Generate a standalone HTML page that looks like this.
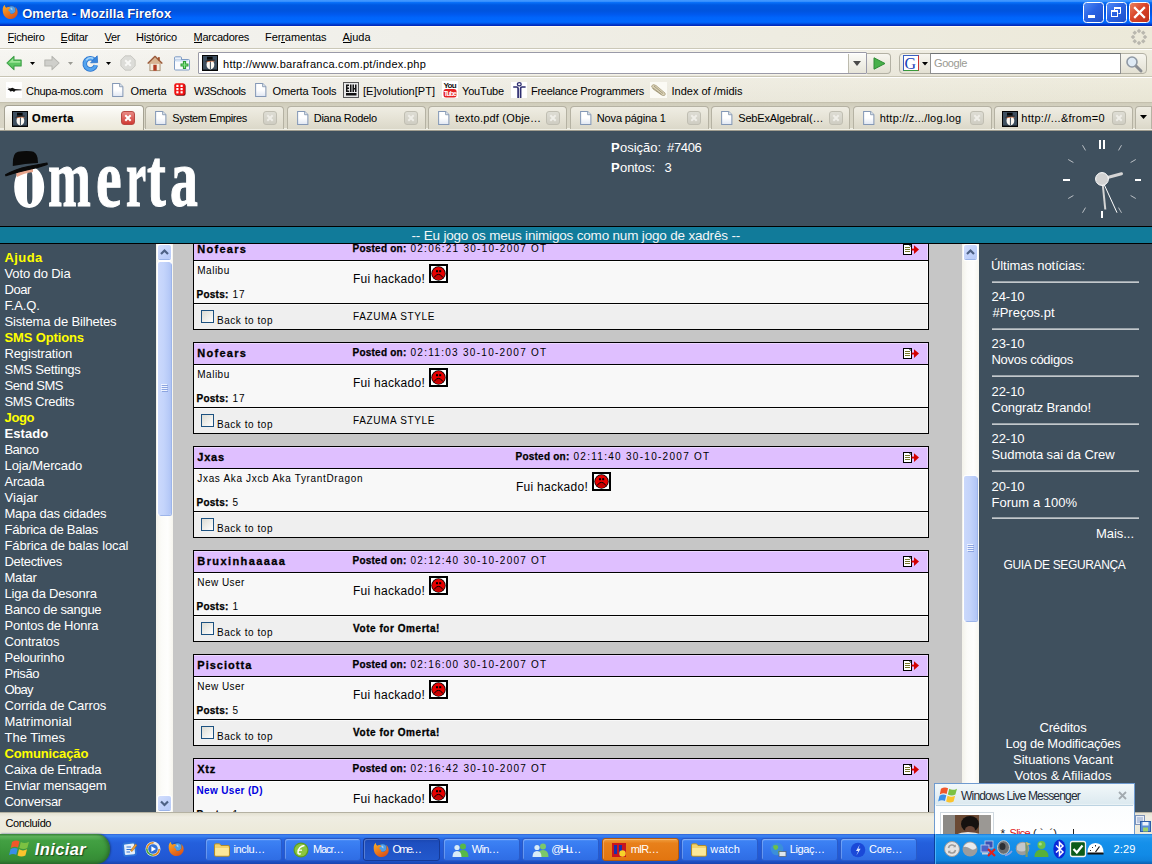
<!DOCTYPE html>
<html><head><meta charset="utf-8"><title>Omerta</title>
<style>
*{box-sizing:border-box;margin:0;padding:0}
html,body{width:1152px;height:864px;overflow:hidden;background:#3f505e;font-family:"Liberation Sans",sans-serif;}
.abs{position:absolute}
.t{position:absolute;white-space:nowrap}
svg{position:absolute;overflow:visible}
</style></head><body>
<!-- chrome -->
<div class="abs" style="left:0px;top:0px;width:1152px;height:26px;background:linear-gradient(#4197ff 0,#3e95ff 5%,#0a72fa 9%,#0059e2 19%,#0054de 42%,#0059ee 55%,#0065fb 68%,#0068ff 85%,#0055e6 90%,#0030c4 96%,#0026b4 100%)"></div>
<svg style="left:2px;top:3.5px" width="16.5" height="15.5" viewBox="0 0 16.5 15.5"><defs><linearGradient id="fg1" x1="0" y1="0" x2="0.6" y2="1"><stop offset="0" stop-color="#f9b22a"/><stop offset=".55" stop-color="#ee7d1c"/><stop offset="1" stop-color="#d9541a"/></linearGradient></defs><circle cx="8.8" cy="7.4" r="6.3" fill="#1c56b8"/><circle cx="9.6" cy="6" r="3.8" fill="#4d9ee8"/><path d="M9 3.2 Q11 4 10.5 6.5 Q9 6 8.2 4.5Z" fill="#9fd0f8"/><path d="M0.7 6.8 C0.4 3.4 1.8 1.3 2.9 0.9 C2.8 2.2 3.4 3.2 4.4 3.7 C5.9 2.6 7.9 3.1 8.5 4.6 C7 4.6 6 5.6 6.5 7.1 C7.6 7.5 8.6 8.1 8.1 9.6 C9.6 10.6 12.6 10.1 13.5 7.1 C14 4.6 13.1 3.1 12.6 2.6 C15.1 4.1 16.2 7.1 15.5 10.1 C14.5 13.6 11 15.4 7.5 15 C3.5 14.5 1 11.2 0.7 6.8Z" fill="url(#fg1)"/></svg>
<span class="t" style="left:22.20px;top:3.80px;font-size:13px;line-height:19px;color:#fff;letter-spacing:0.068px;font-weight:bold;text-shadow:1px 1px 0 #10308c;">Omerta - Mozilla Firefox</span>
<div class="abs" style="left:1083px;top:2px;width:21px;height:21px;background:linear-gradient(135deg,#4f8af6 0,#2a63e4 45%,#2050c8 100%);border:1px solid #fff;border-radius:3.5px;"></div>
<div class="abs" style="left:1106px;top:2px;width:21px;height:21px;background:linear-gradient(135deg,#4f8af6 0,#2a63e4 45%,#2050c8 100%);border:1px solid #fff;border-radius:3.5px;"></div>
<div class="abs" style="left:1129px;top:2px;width:21px;height:21px;background:linear-gradient(135deg,#e9835f 0,#d9452a 45%,#c0301a 100%);border:1px solid #fff;border-radius:3.5px;"></div>
<div class="abs" style="left:1088px;top:15px;width:7px;height:3px;background:#fff"></div>
<svg style="left:1106px;top:2px" width="21" height="21" viewBox="0 0 21 21"><path d="M8.5 8 V5.5 H14.5 V11.5 H12.5" fill="none" stroke="#fff" stroke-width="1"/><rect x="8" y="5" width="7" height="2" fill="#fff"/><rect x="5.5" y="8.5" width="6" height="6" fill="none" stroke="#fff" stroke-width="1"/><rect x="5" y="8" width="7" height="2" fill="#fff"/></svg>
<svg style="left:1129px;top:2px" width="21" height="21" viewBox="0 0 21 21"><path d="M6 6 L15 15 M15 6 L6 15" stroke="#fff" stroke-width="2.3" stroke-linecap="square"/></svg>
<div class="abs" style="left:0px;top:26px;width:1152px;height:23px;background:linear-gradient(90deg,#f6f5f1 0,#f0efe9 35%,#ece9d9 100%);border-top:1px solid #fffcf0;border-bottom:1px solid #cbc8b8"></div>
<span class="t" style="left:7.50px;top:28.69px;font-size:11px;line-height:17px;color:#000;letter-spacing:-0.265px;">Ficheiro</span>
<span class="t" style="left:60.50px;top:28.69px;font-size:11px;line-height:17px;color:#000;letter-spacing:-0.206px;">Editar</span>
<span class="t" style="left:104.50px;top:28.69px;font-size:11px;line-height:17px;color:#000;letter-spacing:-0.337px;">Ver</span>
<span class="t" style="left:136.00px;top:28.69px;font-size:11px;line-height:17px;color:#000;letter-spacing:-0.198px;">Histórico</span>
<span class="t" style="left:193.50px;top:28.69px;font-size:11px;line-height:17px;color:#000;letter-spacing:-0.258px;">Marcadores</span>
<span class="t" style="left:265.00px;top:28.69px;font-size:11px;line-height:17px;color:#000;letter-spacing:-0.078px;">Ferramentas</span>
<span class="t" style="left:342.50px;top:28.69px;font-size:11px;line-height:17px;color:#000;letter-spacing:-0.027px;">Ajuda</span>
<div class="abs" style="left:8px;top:42px;width:6px;height:1px;background:#000"></div>
<div class="abs" style="left:61px;top:42px;width:6px;height:1px;background:#000"></div>
<div class="abs" style="left:105px;top:42px;width:7px;height:1px;background:#000"></div>
<div class="abs" style="left:146px;top:42px;width:6px;height:1px;background:#000"></div>
<div class="abs" style="left:194px;top:42px;width:8px;height:1px;background:#000"></div>
<div class="abs" style="left:280.5px;top:42px;width:4px;height:1px;background:#000"></div>
<div class="abs" style="left:343px;top:42px;width:7px;height:1px;background:#000"></div>
<svg style="left:1131px;top:29px" width="16" height="16" viewBox="0 0 16 16"><rect x="6.40" y="0.40" width="3.2" height="3.2" transform="rotate(45 8.00 2.00)" fill="#b9b7ae"/><rect x="10.64" y="2.16" width="3.2" height="3.2" transform="rotate(45 12.24 3.76)" fill="#b9b7ae"/><rect x="12.40" y="6.40" width="3.2" height="3.2" transform="rotate(45 14.00 8.00)" fill="#b9b7ae"/><rect x="10.64" y="10.64" width="3.2" height="3.2" transform="rotate(45 12.24 12.24)" fill="#b9b7ae"/><rect x="6.40" y="12.40" width="3.2" height="3.2" transform="rotate(45 8.00 14.00)" fill="#b9b7ae"/><rect x="2.16" y="10.64" width="3.2" height="3.2" transform="rotate(45 3.76 12.24)" fill="#b9b7ae"/><rect x="0.40" y="6.40" width="3.2" height="3.2" transform="rotate(45 2.00 8.00)" fill="#b9b7ae"/><rect x="2.16" y="2.16" width="3.2" height="3.2" transform="rotate(45 3.76 3.76)" fill="#b9b7ae"/></svg>
<div class="abs" style="left:0px;top:49px;width:1152px;height:28px;background:linear-gradient(rgba(255,255,255,.18),rgba(0,0,0,.012)),linear-gradient(90deg,#f5f4ef 0,#efede6 35%,#ebe8d8 100%);border-top:1px solid #fff;border-bottom:1px solid #c8c5b4"></div>
<svg style="left:6px;top:55px" width="16" height="16" viewBox="0 0 19 18"><path d="M1 9 L9.5 1 L9.5 5.5 L18 5.5 L18 12.5 L9.5 12.5 L9.5 17 Z" fill="#5cc662" stroke="#3a9c44" stroke-width="1.2" stroke-linejoin="round"/><path d="M3 9 L8.5 3.8 L8.5 6.6 L17 6.6 L17 8.8 L3.5 8.8Z" fill="#a6eba0" opacity=".85"/></svg>
<svg style="left:30px;top:62px" width="5" height="3"><path d="M0 0 L5 0 L2.5 3Z" fill="#000"/></svg>
<svg style="left:43.5px;top:55px" width="16" height="16" viewBox="0 0 19 18"><path d="M18 9 L9.5 1 L9.5 5.5 L1 5.5 L1 12.5 L9.5 12.5 L9.5 17 Z" fill="#cfcfcb" stroke="#b5b5b0" stroke-width="1.2" stroke-linejoin="round"/></svg>
<svg style="left:68px;top:62px" width="5" height="3"><path d="M0 0 L5 0 L2.5 3Z" fill="#9a9a94"/></svg>
<svg style="left:81.5px;top:54.5px" width="16" height="16" viewBox="0 0 16 16"><path d="M12.6 5.2 A5.6 5.6 0 1 0 13.8 10.2" fill="none" stroke="#2a72cc" stroke-width="4.6"/><path d="M12.6 5.2 A5.6 5.6 0 1 0 13.8 10.2" fill="none" stroke="#55a4ee" stroke-width="3"/><path d="M4.2 5.2 A5.6 5.6 0 0 1 11 3.4" fill="none" stroke="#a4d4fa" stroke-width="1.6"/><path d="M8.6 7.8 L15.6 7.6 L15.2 0.8 Z" fill="#3a86dc" stroke="#2a72cc" stroke-width=".8" stroke-linejoin="round"/></svg>
<svg style="left:106px;top:62px" width="5" height="3"><path d="M0 0 L5 0 L2.5 3Z" fill="#000"/></svg>
<svg style="left:119.5px;top:55px" width="16" height="16" viewBox="0 0 19 19"><path d="M6 1 H13 L18 6 V13 L13 18 H6 L1 13 V6Z" fill="#dcdcd8" stroke="#c2c2bc" stroke-width="1"/><path d="M6.2 6.2 L12.8 12.8 M12.8 6.2 L6.2 12.8" stroke="#f8f8f6" stroke-width="2.2"/></svg>
<svg style="left:146.5px;top:54.5px" width="16" height="17" viewBox="0 0 19 20"><rect x="3.5" y="9" width="12" height="9.5" fill="#f3ecdf" stroke="#a08563" stroke-width="1"/><path d="M0.8 10 L9.5 1.5 L18.2 10" fill="#c9a27c" stroke="#9a5a3c" stroke-width="1.6" stroke-linejoin="round"/><path d="M2.5 10 L9.5 3.2 L16.5 10Z" fill="#d8b493"/><rect x="7.5" y="11.5" width="4" height="7" fill="#b03a22"/><rect x="13" y="2.5" width="2.2" height="4" fill="#a0522d"/></svg>
<svg style="left:174px;top:55.5px" width="16" height="15" viewBox="0 0 16 15"><rect x="0.5" y="3.5" width="15" height="10.5" rx="1" fill="#fbfcfe" stroke="#7f9cc4" stroke-width="1"/><rect x="0.5" y="0.8" width="7" height="3.4" rx="1" fill="#e8f0fa" stroke="#7f9cc4" stroke-width="1"/><rect x="1.5" y="4" width="13" height="1.6" fill="#cfe0f4"/><path d="M10.5 5 V13 M6.5 9 H14.5" stroke="#2a9a34" stroke-width="3.2"/><path d="M10.5 6 V12 M7.5 9 H13.5" stroke="#86e486" stroke-width="1.2"/></svg>
<div class="abs" style="left:198px;top:52px;width:669px;height:22px;background:#fff;border:1px solid #9a9aa8;border-radius:1px;box-shadow:0 0 0 1px #f4f2e8"></div>
<svg style="left:202px;top:55px" width="16" height="16" viewBox="0 0 16 16"><rect width="16" height="16" fill="#050505"/><rect x="1" y="1" width="14" height="13.6" fill="#3e4f5f"/><ellipse cx="8.4" cy="9.8" rx="3.9" ry="4.6" fill="#fbf8f2"/><rect x="7.9" y="5.5" width="1" height="9" fill="#3e4f5f"/><path d="M4 6.3 Q8 5.2 12.6 5.6 L12.4 6.4 Q8 6.6 4.2 7.2Z" fill="#d9835a"/><path d="M5 1.8 H10.6 V4.6 H5Z" fill="#050505"/><path d="M3.6 5.9 Q8 4.4 12.8 4.7 L12.8 5.5 Q8 5.4 3.8 6.8Z" fill="#0a0d10"/></svg>
<span class="t" style="left:223.00px;top:55.69px;font-size:11px;line-height:17px;color:#000;letter-spacing:0.258px;">http://www.barafranca.com.pt/index.php</span>
<div class="abs" style="left:848px;top:54px;width:18px;height:19px;background:linear-gradient(#fbfbf8,#e6e4d8);border-left:1px solid #bdbbae"></div>
<svg style="left:853px;top:61px" width="8" height="5"><path d="M0 0 L8 0 L4 5Z" fill="#4a4a4a"/></svg>
<div class="abs" style="left:867px;top:53px;width:24px;height:21px;background:linear-gradient(#f7f6f0,#e3e0d2);border:1px solid #b3b1a4;border-left:none;border-radius:0 4px 4px 0"></div>
<svg style="left:873px;top:57px" width="13" height="13"><path d="M1 0.8 L12 6.5 L1 12.2Z" fill="#48b04a" stroke="#2f8c36" stroke-width="1"/></svg>
<div class="abs" style="left:899px;top:53px;width:248px;height:21px;background:linear-gradient(#f7f6f0,#e3e0d2);border:1px solid #b3b1a4;border-radius:4px"></div>
<div class="abs" style="left:930px;top:53px;width:191px;height:21px;background:#fff;border:1px solid #8e8f8f;border-top-color:#6f7273"></div>
<div class="abs" style="left:903px;top:55px;width:16px;height:16px;background:#fff;border:1px solid #3a5fc0;border-right-color:#c33;border-bottom-color:#3a9a3a"></div>
<span class="t" style="left:904.50px;top:52.60px;font-size:16px;line-height:22px;color:#1a3fb8;letter-spacing:0.000px;font-family:'Liberation Serif',serif;">G</span>
<svg style="left:922px;top:62px" width="6" height="4"><path d="M0 0 L6 0 L3 3.5Z" fill="#000"/></svg>
<span class="t" style="left:934.00px;top:55.19px;font-size:11px;line-height:17px;color:#9a9a92;letter-spacing:-0.411px;">Google</span>
<svg style="left:1125px;top:55px" width="18" height="18" viewBox="0 0 18 18"><path d="M10 10 L16 16" stroke="#8a8d92" stroke-width="3" stroke-linecap="round"/><circle cx="7" cy="7" r="5" fill="#dfeaf5" stroke="#8f98a4" stroke-width="1.6"/></svg>
<div class="abs" style="left:0px;top:77px;width:1152px;height:26px;background:linear-gradient(rgba(255,255,255,.15),rgba(0,0,0,.012)),linear-gradient(90deg,#f4f3ed 0,#eeece3 35%,#ebe8d7 100%);border-top:1px solid #fff"></div>
<div class="abs" style="left:6px;top:82px;width:16px;height:16px;background:#fff"></div>
<svg style="left:6px;top:82px" width="16" height="16"><path d="M1.5 5.5 L4 6.6 L6.5 5.8 L9 7 L15.5 7.4 L15.5 8.2 L9.5 8.6 L8 10 L6.6 9 L4.2 9.4 L3.4 8.2 L1.5 7.4 L3 6.8Z" fill="#111"/></svg>
<span class="t" style="left:26.00px;top:82.69px;font-size:11px;line-height:17px;color:#000;letter-spacing:-0.284px;">Chupa-mos.com</span>
<svg style="left:112px;top:83.2px" width="11.5" height="14" viewBox="0 0 12 15"><defs><linearGradient id="pg" x1="0" y1="0" x2="0" y2="1"><stop offset=".5" stop-color="#fff"/><stop offset="1" stop-color="#dfe6f2"/></linearGradient></defs><path d="M0.5 0.5 H8 L11.5 4 V14.5 H0.5Z" fill="url(#pg)" stroke="#8498b6" stroke-width="1.1"/><path d="M8 0.5 V4 H11.5" fill="#dfe6f0" stroke="#8c9db4" stroke-width="1"/></svg>
<span class="t" style="left:130.50px;top:82.69px;font-size:11px;line-height:17px;color:#000;letter-spacing:-0.113px;">Omerta</span>
<svg style="left:174px;top:83px" width="12" height="13" viewBox="0 0 12 13"><rect x="1" y="1" width="10.6" height="11.8" rx="2" fill="#6a0808"/><rect x="0.3" y="0.2" width="10.6" height="11.8" rx="2" fill="#f01010"/><g fill="#fff"><rect x="2.3" y="1.8" width="2.2" height="2.2"/><rect x="6.5" y="1.8" width="2.2" height="2.2"/><rect x="2.3" y="5" width="2.2" height="2.2"/><rect x="6.5" y="5" width="2.2" height="2.2"/><rect x="2.3" y="8.2" width="2.2" height="2.2"/><rect x="6.5" y="8.2" width="2.2" height="2.2"/></g></svg>
<span class="t" style="left:194.00px;top:82.69px;font-size:11px;line-height:17px;color:#000;letter-spacing:-0.459px;">W3Schools</span>
<svg style="left:254.5px;top:83.2px" width="11.5" height="14" viewBox="0 0 12 15"><defs><linearGradient id="pg" x1="0" y1="0" x2="0" y2="1"><stop offset=".5" stop-color="#fff"/><stop offset="1" stop-color="#dfe6f2"/></linearGradient></defs><path d="M0.5 0.5 H8 L11.5 4 V14.5 H0.5Z" fill="url(#pg)" stroke="#8498b6" stroke-width="1.1"/><path d="M8 0.5 V4 H11.5" fill="#dfe6f0" stroke="#8c9db4" stroke-width="1"/></svg>
<span class="t" style="left:272.50px;top:82.69px;font-size:11px;line-height:17px;color:#000;letter-spacing:-0.101px;">Omerta Tools</span>
<div class="abs" style="left:343px;top:82px;width:16px;height:16px;background:#e8e8e8;border:1px solid #555"></div>
<svg style="left:343px;top:82px" width="16" height="16"><path d="M3 2.5 H6 V4 H4.5 V5.5 H6 V7 H4.5 V8.5 H6.2 V10 H3Z M7 2.5 H8.5 V10 H7Z M9.5 2.5 H11 V6 H12 V2.5 H13.5 V10 H12 V7.5 H11 V10 H9.5Z M3 11 H13.5 V13.5 H3Z" fill="#111"/></svg>
<span class="t" style="left:363.00px;top:82.69px;font-size:11px;line-height:17px;color:#000;letter-spacing:0.031px;">[E]volution[PT]</span>
<svg style="left:442px;top:81px" width="16" height="17" viewBox="0 0 16 17"><rect width="16" height="17" fill="#fff"/><rect x="1.5" y="8" width="13" height="8.5" rx="2.5" fill="#e52222"/></svg>
<span class="t" style="left:443.50px;top:78.73px;font-size:8px;line-height:14px;color:#111;letter-spacing:-0.672px;font-weight:bold;">You</span>
<span class="t" style="left:443.80px;top:87.07px;font-size:7px;line-height:13px;color:#fff;letter-spacing:-1.050px;font-weight:bold;">Tube</span>
<span class="t" style="left:462.00px;top:82.69px;font-size:11px;line-height:17px;color:#000;letter-spacing:-0.175px;">YouTube</span>
<svg style="left:511px;top:82px" width="16" height="16" viewBox="0 0 16 16"><rect width="16" height="16" fill="#fff"/><ellipse cx="8.3" cy="2.2" rx="1.9" ry="1.6" fill="none" stroke="#2e2e70" stroke-width="1.3"/><path d="M2.2 5 H5.6 Q7.1 5 7.1 6.5 V16 M14.6 5 H11 Q9.6 5 9.6 6.5 V16" fill="none" stroke="#2e2e70" stroke-width="1.7"/></svg>
<span class="t" style="left:531.00px;top:82.69px;font-size:11px;line-height:17px;color:#000;letter-spacing:-0.266px;">Freelance Programmers</span>
<svg style="left:650px;top:82px" width="17" height="16" viewBox="0 0 17 16"><rect width="17" height="16" fill="#fbfaf4"/><path d="M1.5 4 Q3 1.5 6 3.5 L15 11 Q16 14 12.5 13.5 L3 7Z" fill="#d9d0b4" stroke="#a99f80" stroke-width=".8"/><path d="M4 4 L13 11.5 M3 6 L11.5 12.5" stroke="#8e8568" stroke-width=".7"/></svg>
<span class="t" style="left:671.50px;top:82.69px;font-size:11px;line-height:17px;color:#000;letter-spacing:0.005px;">Index of /midis</span>
<div class="abs" style="left:0px;top:102px;width:1152px;height:29px;background:linear-gradient(#cfccba 0,#d9d6c7 25%,#d8d5c5 100%);border-top:1px solid #c4c0ae"></div>
<div class="abs" style="left:0px;top:128px;width:1152px;height:3px;background:#a09d8f;border-top:2px solid #efeee4"></div>
<div class="abs" style="left:3.5px;top:105px;width:140px;height:25px;background:linear-gradient(#fdfdfb,#f3f1e8 50%,#ece9da);border:1px solid #a5a293;border-bottom:none;border-radius:4px 4px 0 0"></div>
<svg style="left:12px;top:110.5px" width="16" height="16" viewBox="0 0 16 16"><rect width="16" height="16" fill="#050505"/><rect x="1" y="1" width="14" height="13.6" fill="#3e4f5f"/><ellipse cx="8.4" cy="9.8" rx="3.9" ry="4.6" fill="#fbf8f2"/><rect x="7.9" y="5.5" width="1" height="9" fill="#3e4f5f"/><path d="M4 6.3 Q8 5.2 12.6 5.6 L12.4 6.4 Q8 6.6 4.2 7.2Z" fill="#d9835a"/><path d="M5 1.8 H10.6 V4.6 H5Z" fill="#050505"/><path d="M3.6 5.9 Q8 4.4 12.8 4.7 L12.8 5.5 Q8 5.4 3.8 6.8Z" fill="#0a0d10"/></svg>
<span class="t" style="left:32.00px;top:109.99px;font-size:11px;line-height:17px;color:#000;letter-spacing:0.580px;font-weight:bold;-webkit-text-stroke:0.25px #000;">Omerta</span>
<div class="abs" style="left:121px;top:111px;width:14px;height:14px;background:linear-gradient(#e98a84,#d03a34);border:1px solid #b84a44;border-radius:3px"></div>
<svg style="left:121px;top:111px" width="14" height="14"><path d="M4.3 4.3 L9.7 9.7 M9.7 4.3 L4.3 9.7" stroke="#fff" stroke-width="2"/></svg>
<div class="abs" style="left:145px;top:106px;width:139px;height:23px;background:linear-gradient(#efede3,#e6e3d6 50%,#dbd8c9);border:1px solid #b5b2a3;border-bottom:none;border-radius:4px 4px 0 0"></div>
<svg style="left:155px;top:111px" width="11.5" height="14" viewBox="0 0 12 15"><defs><linearGradient id="pg" x1="0" y1="0" x2="0" y2="1"><stop offset=".5" stop-color="#fff"/><stop offset="1" stop-color="#dfe6f2"/></linearGradient></defs><path d="M0.5 0.5 H8 L11.5 4 V14.5 H0.5Z" fill="url(#pg)" stroke="#8498b6" stroke-width="1.1"/><path d="M8 0.5 V4 H11.5" fill="#dfe6f0" stroke="#8c9db4" stroke-width="1"/></svg>
<span class="t" style="left:172.30px;top:109.99px;font-size:11px;line-height:17px;color:#000;letter-spacing:-0.398px;">System Empires</span>
<div class="abs" style="left:262.5px;top:111px;width:14px;height:14px;background:linear-gradient(#deddd4,#cfcdc2);border:1px solid #c0beb2;border-radius:3px"></div>
<svg style="left:262.5px;top:111px" width="14" height="14"><path d="M4.3 4.3 L9.7 9.7 M9.7 4.3 L4.3 9.7" stroke="#efeee8" stroke-width="2"/></svg>
<div class="abs" style="left:286.5px;top:106px;width:139px;height:23px;background:linear-gradient(#efede3,#e6e3d6 50%,#dbd8c9);border:1px solid #b5b2a3;border-bottom:none;border-radius:4px 4px 0 0"></div>
<svg style="left:296.5px;top:111px" width="11.5" height="14" viewBox="0 0 12 15"><defs><linearGradient id="pg" x1="0" y1="0" x2="0" y2="1"><stop offset=".5" stop-color="#fff"/><stop offset="1" stop-color="#dfe6f2"/></linearGradient></defs><path d="M0.5 0.5 H8 L11.5 4 V14.5 H0.5Z" fill="url(#pg)" stroke="#8498b6" stroke-width="1.1"/><path d="M8 0.5 V4 H11.5" fill="#dfe6f0" stroke="#8c9db4" stroke-width="1"/></svg>
<span class="t" style="left:313.80px;top:109.99px;font-size:11px;line-height:17px;color:#000;letter-spacing:-0.304px;">Diana Rodelo</span>
<div class="abs" style="left:404px;top:111px;width:14px;height:14px;background:linear-gradient(#deddd4,#cfcdc2);border:1px solid #c0beb2;border-radius:3px"></div>
<svg style="left:404px;top:111px" width="14" height="14"><path d="M4.3 4.3 L9.7 9.7 M9.7 4.3 L4.3 9.7" stroke="#efeee8" stroke-width="2"/></svg>
<div class="abs" style="left:428px;top:106px;width:139px;height:23px;background:linear-gradient(#efede3,#e6e3d6 50%,#dbd8c9);border:1px solid #b5b2a3;border-bottom:none;border-radius:4px 4px 0 0"></div>
<svg style="left:438px;top:111px" width="11.5" height="14" viewBox="0 0 12 15"><defs><linearGradient id="pg" x1="0" y1="0" x2="0" y2="1"><stop offset=".5" stop-color="#fff"/><stop offset="1" stop-color="#dfe6f2"/></linearGradient></defs><path d="M0.5 0.5 H8 L11.5 4 V14.5 H0.5Z" fill="url(#pg)" stroke="#8498b6" stroke-width="1.1"/><path d="M8 0.5 V4 H11.5" fill="#dfe6f0" stroke="#8c9db4" stroke-width="1"/></svg>
<span class="t" style="left:455.30px;top:109.99px;font-size:11px;line-height:17px;color:#000;letter-spacing:0.178px;">texto.pdf (Obje…</span>
<div class="abs" style="left:545.5px;top:111px;width:14px;height:14px;background:linear-gradient(#deddd4,#cfcdc2);border:1px solid #c0beb2;border-radius:3px"></div>
<svg style="left:545.5px;top:111px" width="14" height="14"><path d="M4.3 4.3 L9.7 9.7 M9.7 4.3 L4.3 9.7" stroke="#efeee8" stroke-width="2"/></svg>
<div class="abs" style="left:569.5px;top:106px;width:139px;height:23px;background:linear-gradient(#efede3,#e6e3d6 50%,#dbd8c9);border:1px solid #b5b2a3;border-bottom:none;border-radius:4px 4px 0 0"></div>
<svg style="left:579.5px;top:111px" width="11.5" height="14" viewBox="0 0 12 15"><defs><linearGradient id="pg" x1="0" y1="0" x2="0" y2="1"><stop offset=".5" stop-color="#fff"/><stop offset="1" stop-color="#dfe6f2"/></linearGradient></defs><path d="M0.5 0.5 H8 L11.5 4 V14.5 H0.5Z" fill="url(#pg)" stroke="#8498b6" stroke-width="1.1"/><path d="M8 0.5 V4 H11.5" fill="#dfe6f0" stroke="#8c9db4" stroke-width="1"/></svg>
<span class="t" style="left:596.80px;top:109.99px;font-size:11px;line-height:17px;color:#000;letter-spacing:-0.149px;">Nova página 1</span>
<div class="abs" style="left:687px;top:111px;width:14px;height:14px;background:linear-gradient(#deddd4,#cfcdc2);border:1px solid #c0beb2;border-radius:3px"></div>
<svg style="left:687px;top:111px" width="14" height="14"><path d="M4.3 4.3 L9.7 9.7 M9.7 4.3 L4.3 9.7" stroke="#efeee8" stroke-width="2"/></svg>
<div class="abs" style="left:711px;top:106px;width:139px;height:23px;background:linear-gradient(#efede3,#e6e3d6 50%,#dbd8c9);border:1px solid #b5b2a3;border-bottom:none;border-radius:4px 4px 0 0"></div>
<svg style="left:721px;top:111px" width="11.5" height="14" viewBox="0 0 12 15"><defs><linearGradient id="pg" x1="0" y1="0" x2="0" y2="1"><stop offset=".5" stop-color="#fff"/><stop offset="1" stop-color="#dfe6f2"/></linearGradient></defs><path d="M0.5 0.5 H8 L11.5 4 V14.5 H0.5Z" fill="url(#pg)" stroke="#8498b6" stroke-width="1.1"/><path d="M8 0.5 V4 H11.5" fill="#dfe6f0" stroke="#8c9db4" stroke-width="1"/></svg>
<span class="t" style="left:738.30px;top:109.99px;font-size:11px;line-height:17px;color:#000;letter-spacing:-0.203px;">SebExAlgebraI(…</span>
<div class="abs" style="left:828.5px;top:111px;width:14px;height:14px;background:linear-gradient(#deddd4,#cfcdc2);border:1px solid #c0beb2;border-radius:3px"></div>
<svg style="left:828.5px;top:111px" width="14" height="14"><path d="M4.3 4.3 L9.7 9.7 M9.7 4.3 L4.3 9.7" stroke="#efeee8" stroke-width="2"/></svg>
<div class="abs" style="left:852.5px;top:106px;width:139px;height:23px;background:linear-gradient(#efede3,#e6e3d6 50%,#dbd8c9);border:1px solid #b5b2a3;border-bottom:none;border-radius:4px 4px 0 0"></div>
<svg style="left:862.5px;top:111px" width="11.5" height="14" viewBox="0 0 12 15"><defs><linearGradient id="pg" x1="0" y1="0" x2="0" y2="1"><stop offset=".5" stop-color="#fff"/><stop offset="1" stop-color="#dfe6f2"/></linearGradient></defs><path d="M0.5 0.5 H8 L11.5 4 V14.5 H0.5Z" fill="url(#pg)" stroke="#8498b6" stroke-width="1.1"/><path d="M8 0.5 V4 H11.5" fill="#dfe6f0" stroke="#8c9db4" stroke-width="1"/></svg>
<span class="t" style="left:879.80px;top:109.99px;font-size:11px;line-height:17px;color:#000;letter-spacing:0.202px;">http://z.../log.log</span>
<div class="abs" style="left:970px;top:111px;width:14px;height:14px;background:linear-gradient(#deddd4,#cfcdc2);border:1px solid #c0beb2;border-radius:3px"></div>
<svg style="left:970px;top:111px" width="14" height="14"><path d="M4.3 4.3 L9.7 9.7 M9.7 4.3 L4.3 9.7" stroke="#efeee8" stroke-width="2"/></svg>
<div class="abs" style="left:994px;top:106px;width:139px;height:23px;background:linear-gradient(#efede3,#e6e3d6 50%,#dbd8c9);border:1px solid #b5b2a3;border-bottom:none;border-radius:4px 4px 0 0"></div>
<svg style="left:1001.5px;top:110.5px" width="16" height="16" viewBox="0 0 16 16"><rect width="16" height="16" fill="#050505"/><rect x="1" y="1" width="14" height="13.6" fill="#3e4f5f"/><ellipse cx="8.4" cy="9.8" rx="3.9" ry="4.6" fill="#fbf8f2"/><rect x="7.9" y="5.5" width="1" height="9" fill="#3e4f5f"/><path d="M4 6.3 Q8 5.2 12.6 5.6 L12.4 6.4 Q8 6.6 4.2 7.2Z" fill="#d9835a"/><path d="M5 1.8 H10.6 V4.6 H5Z" fill="#050505"/><path d="M3.6 5.9 Q8 4.4 12.8 4.7 L12.8 5.5 Q8 5.4 3.8 6.8Z" fill="#0a0d10"/></svg>
<span class="t" style="left:1021.30px;top:109.99px;font-size:11px;line-height:17px;color:#000;letter-spacing:0.290px;">http://...&amp;from=0</span>
<div class="abs" style="left:1111.5px;top:111px;width:14px;height:14px;background:linear-gradient(#deddd4,#cfcdc2);border:1px solid #c0beb2;border-radius:3px"></div>
<svg style="left:1111.5px;top:111px" width="14" height="14"><path d="M4.3 4.3 L9.7 9.7 M9.7 4.3 L4.3 9.7" stroke="#efeee8" stroke-width="2"/></svg>
<div class="abs" style="left:1135px;top:106px;width:17px;height:23px;background:linear-gradient(#efede3,#dbd8c9);border:1px solid #b5b2a3;border-bottom:none;border-radius:4px 0 0 0"></div>
<svg style="left:1140px;top:115px" width="7" height="4"><path d="M0 0 L7 0 L3.5 4Z" fill="#000"/></svg>
<div class="abs" style="left:156px;top:244px;width:17px;height:568px;background:linear-gradient(90deg,#f3f2ea 0,#fbfbf8 30%,#fefefd 70%,#f6f5ee 100%)"></div>
<div class="abs" style="left:157px;top:244px;width:15px;height:17px;background:#fff;border-radius:3px"></div>
<div class="abs" style="left:158px;top:245px;width:13px;height:14px;background:linear-gradient(135deg,#d3defc 0,#c3d3fb 50%,#b6c9f8 100%);border-radius:2px;box-shadow:0 1px 0 #9ab3e8"></div>
<svg style="left:160px;top:249px" width="9" height="7"><path d="M1 5 L4.5 1.5 L8 5" stroke="#4d6185" stroke-width="2.2" fill="none"/></svg>
<div class="abs" style="left:157px;top:795px;width:15px;height:17px;background:#fff;border-radius:3px"></div>
<div class="abs" style="left:158px;top:796px;width:13px;height:14px;background:linear-gradient(135deg,#d3defc 0,#c3d3fb 50%,#b6c9f8 100%);border-radius:2px;box-shadow:0 1px 0 #9ab3e8"></div>
<svg style="left:160px;top:800px" width="9" height="7"><path d="M1 1.5 L4.5 5 L8 1.5" stroke="#4d6185" stroke-width="2.2" fill="none"/></svg>
<div class="abs" style="left:157px;top:261px;width:15px;height:255px;background:#fff;border-radius:3px"></div>
<div class="abs" style="left:158px;top:262px;width:13px;height:253px;background:linear-gradient(90deg,#cbd9fc 0,#c4d4fb 45%,#b8cbf8 80%,#b0c4f5 100%);border-radius:2px;box-shadow:1px 1px 0 #9db5ea"></div>
<div class="abs" style="left:161px;top:384px;width:6px;height:1px;background:#eef3fe"></div>
<div class="abs" style="left:162px;top:385px;width:6px;height:1px;background:#8ca4e0"></div>
<div class="abs" style="left:161px;top:386px;width:6px;height:1px;background:#eef3fe"></div>
<div class="abs" style="left:162px;top:387px;width:6px;height:1px;background:#8ca4e0"></div>
<div class="abs" style="left:161px;top:388px;width:6px;height:1px;background:#eef3fe"></div>
<div class="abs" style="left:162px;top:389px;width:6px;height:1px;background:#8ca4e0"></div>
<div class="abs" style="left:161px;top:390px;width:6px;height:1px;background:#eef3fe"></div>
<div class="abs" style="left:162px;top:391px;width:6px;height:1px;background:#8ca4e0"></div>
<div class="abs" style="left:962px;top:244px;width:17px;height:568px;background:linear-gradient(90deg,#f3f2ea 0,#fbfbf8 30%,#fefefd 70%,#f6f5ee 100%)"></div>
<div class="abs" style="left:963px;top:244px;width:15px;height:17px;background:#fff;border-radius:3px"></div>
<div class="abs" style="left:964px;top:245px;width:13px;height:14px;background:linear-gradient(135deg,#d3defc 0,#c3d3fb 50%,#b6c9f8 100%);border-radius:2px;box-shadow:0 1px 0 #9ab3e8"></div>
<svg style="left:966px;top:249px" width="9" height="7"><path d="M1 5 L4.5 1.5 L8 5" stroke="#4d6185" stroke-width="2.2" fill="none"/></svg>
<div class="abs" style="left:963px;top:795px;width:15px;height:17px;background:#fff;border-radius:3px"></div>
<div class="abs" style="left:964px;top:796px;width:13px;height:14px;background:linear-gradient(135deg,#d3defc 0,#c3d3fb 50%,#b6c9f8 100%);border-radius:2px;box-shadow:0 1px 0 #9ab3e8"></div>
<svg style="left:966px;top:800px" width="9" height="7"><path d="M1 1.5 L4.5 5 L8 1.5" stroke="#4d6185" stroke-width="2.2" fill="none"/></svg>
<div class="abs" style="left:963px;top:475px;width:15px;height:147px;background:#fff;border-radius:3px"></div>
<div class="abs" style="left:964px;top:476px;width:13px;height:145px;background:linear-gradient(90deg,#cbd9fc 0,#c4d4fb 45%,#b8cbf8 80%,#b0c4f5 100%);border-radius:2px;box-shadow:1px 1px 0 #9db5ea"></div>
<div class="abs" style="left:967px;top:544px;width:6px;height:1px;background:#eef3fe"></div>
<div class="abs" style="left:968px;top:545px;width:6px;height:1px;background:#8ca4e0"></div>
<div class="abs" style="left:967px;top:546px;width:6px;height:1px;background:#eef3fe"></div>
<div class="abs" style="left:968px;top:547px;width:6px;height:1px;background:#8ca4e0"></div>
<div class="abs" style="left:967px;top:548px;width:6px;height:1px;background:#eef3fe"></div>
<div class="abs" style="left:968px;top:549px;width:6px;height:1px;background:#8ca4e0"></div>
<div class="abs" style="left:967px;top:550px;width:6px;height:1px;background:#eef3fe"></div>
<div class="abs" style="left:968px;top:551px;width:6px;height:1px;background:#8ca4e0"></div>
<!-- page -->
<div class="abs" style="left:0px;top:131px;width:1152px;height:95px;background:#3f505e"></div>
<div class="abs" style="left:0px;top:226px;width:1152px;height:18px;background:#117b9a;border-top:1px solid #000;border-bottom:1px solid #000"></div>
<span class="t" style="left:411.50px;top:225.57px;font-size:13.5px;line-height:19px;color:#f2f6f8;letter-spacing:-0.183px;">-- Eu jogo os meus inimigos como num jogo de xadrês --</span>
<div class="abs" style="left:0px;top:244px;width:156px;height:568px;background:#3f505e"></div>
<span class="t" style="left:4.50px;top:248.00px;font-size:13px;line-height:19px;color:#ffff00;letter-spacing:0.397px;font-weight:bold;">Ajuda</span>
<span class="t" style="left:4.50px;top:264.00px;font-size:13px;line-height:19px;color:#fff;letter-spacing:-0.111px;">Voto do Dia</span>
<span class="t" style="left:4.50px;top:280.00px;font-size:13px;line-height:19px;color:#fff;letter-spacing:-0.445px;">Doar</span>
<span class="t" style="left:4.50px;top:296.00px;font-size:13px;line-height:19px;color:#fff;letter-spacing:-0.170px;">F.A.Q.</span>
<span class="t" style="left:4.50px;top:312.00px;font-size:13px;line-height:19px;color:#fff;letter-spacing:-0.158px;">Sistema de Bilhetes</span>
<span class="t" style="left:4.50px;top:328.00px;font-size:13px;line-height:19px;color:#ffff00;letter-spacing:-0.136px;font-weight:bold;">SMS Options</span>
<span class="t" style="left:4.50px;top:344.00px;font-size:13px;line-height:19px;color:#fff;letter-spacing:-0.148px;">Registration</span>
<span class="t" style="left:4.50px;top:360.00px;font-size:13px;line-height:19px;color:#fff;letter-spacing:-0.230px;">SMS Settings</span>
<span class="t" style="left:4.50px;top:376.00px;font-size:13px;line-height:19px;color:#fff;letter-spacing:-0.444px;">Send SMS</span>
<span class="t" style="left:4.50px;top:392.00px;font-size:13px;line-height:19px;color:#fff;letter-spacing:-0.297px;">SMS Credits</span>
<span class="t" style="left:4.50px;top:408.00px;font-size:13px;line-height:19px;color:#ffff00;letter-spacing:-0.339px;font-weight:bold;">Jogo</span>
<span class="t" style="left:4.50px;top:424.00px;font-size:13px;line-height:19px;color:#fff;letter-spacing:0.076px;font-weight:bold;">Estado</span>
<span class="t" style="left:4.50px;top:440.00px;font-size:13px;line-height:19px;color:#fff;letter-spacing:-0.613px;">Banco</span>
<span class="t" style="left:4.50px;top:456.00px;font-size:13px;line-height:19px;color:#fff;letter-spacing:-0.089px;">Loja/Mercado</span>
<span class="t" style="left:4.50px;top:472.00px;font-size:13px;line-height:19px;color:#fff;letter-spacing:-0.232px;">Arcada</span>
<span class="t" style="left:4.50px;top:488.00px;font-size:13px;line-height:19px;color:#fff;letter-spacing:0.066px;">Viajar</span>
<span class="t" style="left:4.50px;top:504.00px;font-size:13px;line-height:19px;color:#fff;letter-spacing:-0.226px;">Mapa das cidades</span>
<span class="t" style="left:4.50px;top:520.00px;font-size:13px;line-height:19px;color:#fff;letter-spacing:-0.254px;">Fábrica de Balas</span>
<span class="t" style="left:4.50px;top:536.00px;font-size:13px;line-height:19px;color:#fff;letter-spacing:-0.117px;">Fábrica de balas local</span>
<span class="t" style="left:4.50px;top:552.00px;font-size:13px;line-height:19px;color:#fff;letter-spacing:-0.329px;">Detectives</span>
<span class="t" style="left:4.50px;top:568.00px;font-size:13px;line-height:19px;color:#fff;letter-spacing:-0.206px;">Matar</span>
<span class="t" style="left:4.50px;top:584.00px;font-size:13px;line-height:19px;color:#fff;letter-spacing:-0.214px;">Liga da Desonra</span>
<span class="t" style="left:4.50px;top:600.00px;font-size:13px;line-height:19px;color:#fff;letter-spacing:-0.293px;">Banco de sangue</span>
<span class="t" style="left:4.50px;top:616.00px;font-size:13px;line-height:19px;color:#fff;letter-spacing:-0.258px;">Pontos de Honra</span>
<span class="t" style="left:4.50px;top:632.00px;font-size:13px;line-height:19px;color:#fff;letter-spacing:-0.185px;">Contratos</span>
<span class="t" style="left:4.50px;top:648.00px;font-size:13px;line-height:19px;color:#fff;letter-spacing:-0.246px;">Pelourinho</span>
<span class="t" style="left:4.50px;top:664.00px;font-size:13px;line-height:19px;color:#fff;letter-spacing:-0.375px;">Prisão</span>
<span class="t" style="left:4.50px;top:680.00px;font-size:13px;line-height:19px;color:#fff;letter-spacing:-0.668px;">Obay</span>
<span class="t" style="left:4.50px;top:696.00px;font-size:13px;line-height:19px;color:#fff;letter-spacing:-0.090px;">Corrida de Carros</span>
<span class="t" style="left:4.50px;top:712.00px;font-size:13px;line-height:19px;color:#fff;letter-spacing:-0.017px;">Matrimonial</span>
<span class="t" style="left:4.50px;top:728.00px;font-size:13px;line-height:19px;color:#fff;letter-spacing:-0.021px;">The Times</span>
<span class="t" style="left:4.50px;top:744.00px;font-size:13px;line-height:19px;color:#ffff00;letter-spacing:-0.141px;font-weight:bold;">Comunicação</span>
<span class="t" style="left:4.50px;top:760.00px;font-size:13px;line-height:19px;color:#fff;letter-spacing:-0.229px;">Caixa de Entrada</span>
<span class="t" style="left:4.50px;top:776.00px;font-size:13px;line-height:19px;color:#fff;letter-spacing:-0.198px;">Enviar mensagem</span>
<span class="t" style="left:4.50px;top:792.00px;font-size:13px;line-height:19px;color:#fff;letter-spacing:-0.286px;">Conversar</span>
<div class="abs" style="left:173px;top:244px;width:789px;height:568px;background:#c6c6c6"></div>
<div class="abs" style="left:173px;top:244px;width:789px;height:568px;overflow:hidden">
<div class="abs" style="left:20px;top:-6px;width:736px;height:92px;background:#000"></div>
<div class="abs" style="left:21px;top:-5px;width:734px;height:21px;background:#dfbfff;border-top:1px solid #ecd6ff;border-right:1px solid #ecd6ff"></div>
<div class="abs" style="left:21px;top:17px;width:734px;height:42px;background:#f8f8f8;border-top:1px solid #fff;border-right:1px solid #fff"></div>
<div class="abs" style="left:21px;top:60px;width:734px;height:25px;background:#efefef;border-top:1px solid #f8f8f8;border-right:1px solid #f8f8f8"></div>
<span class="t" style="left:24.30px;top:-3.31px;font-size:11px;line-height:17px;color:#000;letter-spacing:1.263px;font-weight:bold;-webkit-text-stroke:0.3px #000;">Nofears</span>
<span class="t" style="left:179.50px;top:-3.47px;font-size:10px;line-height:16px;color:#000;letter-spacing:0.233px;font-weight:bold;-webkit-text-stroke:0.25px #000;">Posted on:</span>
<span class="t" style="left:237.50px;top:-3.47px;font-size:10px;line-height:16px;color:#000;letter-spacing:1.248px;">02:06:21 30-10-2007 OT</span>
<svg style="left:730px;top:0px" width="17" height="12" viewBox="0 0 17 12"><rect x="0.5" y="0.5" width="8" height="10" fill="#fff" stroke="#000" stroke-width="1"/><path d="M6 0.5 L8.5 3" stroke="#000" stroke-width="1" fill="none"/><rect x="2" y="3" width="5" height="1" fill="#77772a"/><rect x="2" y="5" width="5" height="1" fill="#77772a"/><rect x="2" y="7" width="5" height="1" fill="#77772a"/><rect x="8.5" y="4.6" width="3" height="1.9" fill="#d40000"/><path d="M11 1.2 L16 5.6 L11 10 Z" fill="#d40000"/></svg>
<span class="t" style="left:24.30px;top:19.04px;font-size:10px;line-height:16px;color:#000;letter-spacing:0.490px;">Malibu</span>
<span class="t" style="left:23.50px;top:42.53px;font-size:10px;line-height:16px;color:#000;letter-spacing:0.239px;font-weight:bold;-webkit-text-stroke:0.25px #000;">Posts:</span>
<span class="t" style="left:59.40px;top:42.53px;font-size:10px;line-height:16px;color:#000;letter-spacing:1.000px;">17</span>
<span class="t" style="left:180.00px;top:25.84px;font-size:12px;line-height:18px;color:#000;letter-spacing:0.274px;">Fui hackado!</span>
<svg style="left:256px;top:20px" width="19" height="19" viewBox="0 0 19 19"><rect x="0" y="0" width="19" height="19" fill="#000"/><rect x="2" y="2" width="15" height="15" fill="#fff"/><circle cx="9.5" cy="9.5" r="7.2" fill="#000"/><circle cx="9.5" cy="9.5" r="6.4" fill="#e80000"/><path d="M4.5 12.5 A6.4 6.4 0 0 0 14.5 12.5 Q9.5 9.5 4.5 12.5Z" fill="#c40000"/><rect x="7" y="6.2" width="2" height="2" fill="#000"/><rect x="10.2" y="6.2" width="2" height="2" fill="#000"/><path d="M5.2 13.2 L7.8 10.8 Q9.5 10 11.2 10.8 L13.8 13.2" stroke="#000" stroke-width="1" fill="none"/></svg>
<div class="abs" style="left:28px;top:66px;width:13px;height:13px;background:linear-gradient(135deg,#dcdcd4,#fff);border:1px solid #1c5180"></div>
<span class="t" style="left:44.00px;top:68.53px;font-size:10px;line-height:16px;color:#000;letter-spacing:0.542px;">Back to top</span>
<span class="t" style="left:180.00px;top:64.53px;font-size:10px;line-height:16px;color:#000;letter-spacing:0.627px;">FAZUMA STYLE</span>
<div class="abs" style="left:20px;top:98px;width:736px;height:92px;background:#000"></div>
<div class="abs" style="left:21px;top:99px;width:734px;height:21px;background:#dfbfff;border-top:1px solid #ecd6ff;border-right:1px solid #ecd6ff"></div>
<div class="abs" style="left:21px;top:121px;width:734px;height:42px;background:#f8f8f8;border-top:1px solid #fff;border-right:1px solid #fff"></div>
<div class="abs" style="left:21px;top:164px;width:734px;height:25px;background:#efefef;border-top:1px solid #f8f8f8;border-right:1px solid #f8f8f8"></div>
<span class="t" style="left:24.30px;top:100.69px;font-size:11px;line-height:17px;color:#000;letter-spacing:1.263px;font-weight:bold;-webkit-text-stroke:0.3px #000;">Nofears</span>
<span class="t" style="left:179.50px;top:100.53px;font-size:10px;line-height:16px;color:#000;letter-spacing:0.233px;font-weight:bold;-webkit-text-stroke:0.25px #000;">Posted on:</span>
<span class="t" style="left:237.50px;top:100.53px;font-size:10px;line-height:16px;color:#000;letter-spacing:1.282px;">02:11:03 30-10-2007 OT</span>
<svg style="left:730px;top:104px" width="17" height="12" viewBox="0 0 17 12"><rect x="0.5" y="0.5" width="8" height="10" fill="#fff" stroke="#000" stroke-width="1"/><path d="M6 0.5 L8.5 3" stroke="#000" stroke-width="1" fill="none"/><rect x="2" y="3" width="5" height="1" fill="#77772a"/><rect x="2" y="5" width="5" height="1" fill="#77772a"/><rect x="2" y="7" width="5" height="1" fill="#77772a"/><rect x="8.5" y="4.6" width="3" height="1.9" fill="#d40000"/><path d="M11 1.2 L16 5.6 L11 10 Z" fill="#d40000"/></svg>
<span class="t" style="left:24.30px;top:123.04px;font-size:10px;line-height:16px;color:#000;letter-spacing:0.490px;">Malibu</span>
<span class="t" style="left:23.50px;top:146.53px;font-size:10px;line-height:16px;color:#000;letter-spacing:0.239px;font-weight:bold;-webkit-text-stroke:0.25px #000;">Posts:</span>
<span class="t" style="left:59.40px;top:146.53px;font-size:10px;line-height:16px;color:#000;letter-spacing:1.000px;">17</span>
<span class="t" style="left:180.00px;top:129.84px;font-size:12px;line-height:18px;color:#000;letter-spacing:0.274px;">Fui hackado!</span>
<svg style="left:256px;top:124px" width="19" height="19" viewBox="0 0 19 19"><rect x="0" y="0" width="19" height="19" fill="#000"/><rect x="2" y="2" width="15" height="15" fill="#fff"/><circle cx="9.5" cy="9.5" r="7.2" fill="#000"/><circle cx="9.5" cy="9.5" r="6.4" fill="#e80000"/><path d="M4.5 12.5 A6.4 6.4 0 0 0 14.5 12.5 Q9.5 9.5 4.5 12.5Z" fill="#c40000"/><rect x="7" y="6.2" width="2" height="2" fill="#000"/><rect x="10.2" y="6.2" width="2" height="2" fill="#000"/><path d="M5.2 13.2 L7.8 10.8 Q9.5 10 11.2 10.8 L13.8 13.2" stroke="#000" stroke-width="1" fill="none"/></svg>
<div class="abs" style="left:28px;top:170px;width:13px;height:13px;background:linear-gradient(135deg,#dcdcd4,#fff);border:1px solid #1c5180"></div>
<span class="t" style="left:44.00px;top:172.53px;font-size:10px;line-height:16px;color:#000;letter-spacing:0.542px;">Back to top</span>
<span class="t" style="left:180.00px;top:168.53px;font-size:10px;line-height:16px;color:#000;letter-spacing:0.627px;">FAZUMA STYLE</span>
<div class="abs" style="left:20px;top:202px;width:736px;height:92px;background:#000"></div>
<div class="abs" style="left:21px;top:203px;width:734px;height:21px;background:#dfbfff;border-top:1px solid #ecd6ff;border-right:1px solid #ecd6ff"></div>
<div class="abs" style="left:21px;top:225px;width:734px;height:42px;background:#f8f8f8;border-top:1px solid #fff;border-right:1px solid #fff"></div>
<div class="abs" style="left:21px;top:268px;width:734px;height:25px;background:#efefef;border-top:1px solid #f8f8f8;border-right:1px solid #f8f8f8"></div>
<span class="t" style="left:24.30px;top:204.69px;font-size:11px;line-height:17px;color:#000;letter-spacing:0.758px;font-weight:bold;-webkit-text-stroke:0.3px #000;">Jxas</span>
<span class="t" style="left:342.50px;top:204.53px;font-size:10px;line-height:16px;color:#000;letter-spacing:0.233px;font-weight:bold;-webkit-text-stroke:0.25px #000;">Posted on:</span>
<span class="t" style="left:400.50px;top:204.53px;font-size:10px;line-height:16px;color:#000;letter-spacing:1.282px;">02:11:40 30-10-2007 OT</span>
<svg style="left:730px;top:208px" width="17" height="12" viewBox="0 0 17 12"><rect x="0.5" y="0.5" width="8" height="10" fill="#fff" stroke="#000" stroke-width="1"/><path d="M6 0.5 L8.5 3" stroke="#000" stroke-width="1" fill="none"/><rect x="2" y="3" width="5" height="1" fill="#77772a"/><rect x="2" y="5" width="5" height="1" fill="#77772a"/><rect x="2" y="7" width="5" height="1" fill="#77772a"/><rect x="8.5" y="4.6" width="3" height="1.9" fill="#d40000"/><path d="M11 1.2 L16 5.6 L11 10 Z" fill="#d40000"/></svg>
<span class="t" style="left:24.30px;top:227.03px;font-size:10px;line-height:16px;color:#000;letter-spacing:0.666px;">Jxas Aka Jxcb Aka TyrantDragon</span>
<span class="t" style="left:23.50px;top:250.53px;font-size:10px;line-height:16px;color:#000;letter-spacing:0.239px;font-weight:bold;-webkit-text-stroke:0.25px #000;">Posts:</span>
<span class="t" style="left:59.40px;top:250.53px;font-size:10px;line-height:16px;color:#000;letter-spacing:1.000px;">5</span>
<span class="t" style="left:343.00px;top:233.84px;font-size:12px;line-height:18px;color:#000;letter-spacing:0.274px;">Fui hackado!</span>
<svg style="left:419px;top:228px" width="19" height="19" viewBox="0 0 19 19"><rect x="0" y="0" width="19" height="19" fill="#000"/><rect x="2" y="2" width="15" height="15" fill="#fff"/><circle cx="9.5" cy="9.5" r="7.2" fill="#000"/><circle cx="9.5" cy="9.5" r="6.4" fill="#e80000"/><path d="M4.5 12.5 A6.4 6.4 0 0 0 14.5 12.5 Q9.5 9.5 4.5 12.5Z" fill="#c40000"/><rect x="7" y="6.2" width="2" height="2" fill="#000"/><rect x="10.2" y="6.2" width="2" height="2" fill="#000"/><path d="M5.2 13.2 L7.8 10.8 Q9.5 10 11.2 10.8 L13.8 13.2" stroke="#000" stroke-width="1" fill="none"/></svg>
<div class="abs" style="left:28px;top:274px;width:13px;height:13px;background:linear-gradient(135deg,#dcdcd4,#fff);border:1px solid #1c5180"></div>
<span class="t" style="left:44.00px;top:276.53px;font-size:10px;line-height:16px;color:#000;letter-spacing:0.542px;">Back to top</span>
<div class="abs" style="left:20px;top:306px;width:736px;height:92px;background:#000"></div>
<div class="abs" style="left:21px;top:307px;width:734px;height:21px;background:#dfbfff;border-top:1px solid #ecd6ff;border-right:1px solid #ecd6ff"></div>
<div class="abs" style="left:21px;top:329px;width:734px;height:42px;background:#f8f8f8;border-top:1px solid #fff;border-right:1px solid #fff"></div>
<div class="abs" style="left:21px;top:372px;width:734px;height:25px;background:#efefef;border-top:1px solid #f8f8f8;border-right:1px solid #f8f8f8"></div>
<span class="t" style="left:24.30px;top:308.69px;font-size:11px;line-height:17px;color:#000;letter-spacing:1.405px;font-weight:bold;-webkit-text-stroke:0.3px #000;">Bruxinhaaaaa</span>
<span class="t" style="left:179.50px;top:308.53px;font-size:10px;line-height:16px;color:#000;letter-spacing:0.233px;font-weight:bold;-webkit-text-stroke:0.25px #000;">Posted on:</span>
<span class="t" style="left:237.50px;top:308.53px;font-size:10px;line-height:16px;color:#000;letter-spacing:1.248px;">02:12:40 30-10-2007 OT</span>
<svg style="left:730px;top:312px" width="17" height="12" viewBox="0 0 17 12"><rect x="0.5" y="0.5" width="8" height="10" fill="#fff" stroke="#000" stroke-width="1"/><path d="M6 0.5 L8.5 3" stroke="#000" stroke-width="1" fill="none"/><rect x="2" y="3" width="5" height="1" fill="#77772a"/><rect x="2" y="5" width="5" height="1" fill="#77772a"/><rect x="2" y="7" width="5" height="1" fill="#77772a"/><rect x="8.5" y="4.6" width="3" height="1.9" fill="#d40000"/><path d="M11 1.2 L16 5.6 L11 10 Z" fill="#d40000"/></svg>
<span class="t" style="left:24.30px;top:331.03px;font-size:10px;line-height:16px;color:#000;letter-spacing:0.462px;">New User</span>
<span class="t" style="left:23.50px;top:354.53px;font-size:10px;line-height:16px;color:#000;letter-spacing:0.239px;font-weight:bold;-webkit-text-stroke:0.25px #000;">Posts:</span>
<span class="t" style="left:59.40px;top:354.53px;font-size:10px;line-height:16px;color:#000;letter-spacing:1.000px;">1</span>
<span class="t" style="left:180.00px;top:337.84px;font-size:12px;line-height:18px;color:#000;letter-spacing:0.274px;">Fui hackado!</span>
<svg style="left:256px;top:332px" width="19" height="19" viewBox="0 0 19 19"><rect x="0" y="0" width="19" height="19" fill="#000"/><rect x="2" y="2" width="15" height="15" fill="#fff"/><circle cx="9.5" cy="9.5" r="7.2" fill="#000"/><circle cx="9.5" cy="9.5" r="6.4" fill="#e80000"/><path d="M4.5 12.5 A6.4 6.4 0 0 0 14.5 12.5 Q9.5 9.5 4.5 12.5Z" fill="#c40000"/><rect x="7" y="6.2" width="2" height="2" fill="#000"/><rect x="10.2" y="6.2" width="2" height="2" fill="#000"/><path d="M5.2 13.2 L7.8 10.8 Q9.5 10 11.2 10.8 L13.8 13.2" stroke="#000" stroke-width="1" fill="none"/></svg>
<div class="abs" style="left:28px;top:378px;width:13px;height:13px;background:linear-gradient(135deg,#dcdcd4,#fff);border:1px solid #1c5180"></div>
<span class="t" style="left:44.00px;top:380.53px;font-size:10px;line-height:16px;color:#000;letter-spacing:0.542px;">Back to top</span>
<span class="t" style="left:180.00px;top:376.53px;font-size:10px;line-height:16px;color:#000;letter-spacing:0.552px;font-weight:bold;-webkit-text-stroke:0.3px #000;">Vote for Omerta!</span>
<div class="abs" style="left:20px;top:410px;width:736px;height:92px;background:#000"></div>
<div class="abs" style="left:21px;top:411px;width:734px;height:21px;background:#dfbfff;border-top:1px solid #ecd6ff;border-right:1px solid #ecd6ff"></div>
<div class="abs" style="left:21px;top:433px;width:734px;height:42px;background:#f8f8f8;border-top:1px solid #fff;border-right:1px solid #fff"></div>
<div class="abs" style="left:21px;top:476px;width:734px;height:25px;background:#efefef;border-top:1px solid #f8f8f8;border-right:1px solid #f8f8f8"></div>
<span class="t" style="left:24.30px;top:412.69px;font-size:11px;line-height:17px;color:#000;letter-spacing:1.017px;font-weight:bold;-webkit-text-stroke:0.3px #000;">Pisciotta</span>
<span class="t" style="left:179.50px;top:412.53px;font-size:10px;line-height:16px;color:#000;letter-spacing:0.233px;font-weight:bold;-webkit-text-stroke:0.25px #000;">Posted on:</span>
<span class="t" style="left:237.50px;top:412.53px;font-size:10px;line-height:16px;color:#000;letter-spacing:1.248px;">02:16:00 30-10-2007 OT</span>
<svg style="left:730px;top:416px" width="17" height="12" viewBox="0 0 17 12"><rect x="0.5" y="0.5" width="8" height="10" fill="#fff" stroke="#000" stroke-width="1"/><path d="M6 0.5 L8.5 3" stroke="#000" stroke-width="1" fill="none"/><rect x="2" y="3" width="5" height="1" fill="#77772a"/><rect x="2" y="5" width="5" height="1" fill="#77772a"/><rect x="2" y="7" width="5" height="1" fill="#77772a"/><rect x="8.5" y="4.6" width="3" height="1.9" fill="#d40000"/><path d="M11 1.2 L16 5.6 L11 10 Z" fill="#d40000"/></svg>
<span class="t" style="left:24.30px;top:435.03px;font-size:10px;line-height:16px;color:#000;letter-spacing:0.462px;">New User</span>
<span class="t" style="left:23.50px;top:458.53px;font-size:10px;line-height:16px;color:#000;letter-spacing:0.239px;font-weight:bold;-webkit-text-stroke:0.25px #000;">Posts:</span>
<span class="t" style="left:59.40px;top:458.53px;font-size:10px;line-height:16px;color:#000;letter-spacing:1.000px;">5</span>
<span class="t" style="left:180.00px;top:441.84px;font-size:12px;line-height:18px;color:#000;letter-spacing:0.274px;">Fui hackado!</span>
<svg style="left:256px;top:436px" width="19" height="19" viewBox="0 0 19 19"><rect x="0" y="0" width="19" height="19" fill="#000"/><rect x="2" y="2" width="15" height="15" fill="#fff"/><circle cx="9.5" cy="9.5" r="7.2" fill="#000"/><circle cx="9.5" cy="9.5" r="6.4" fill="#e80000"/><path d="M4.5 12.5 A6.4 6.4 0 0 0 14.5 12.5 Q9.5 9.5 4.5 12.5Z" fill="#c40000"/><rect x="7" y="6.2" width="2" height="2" fill="#000"/><rect x="10.2" y="6.2" width="2" height="2" fill="#000"/><path d="M5.2 13.2 L7.8 10.8 Q9.5 10 11.2 10.8 L13.8 13.2" stroke="#000" stroke-width="1" fill="none"/></svg>
<div class="abs" style="left:28px;top:482px;width:13px;height:13px;background:linear-gradient(135deg,#dcdcd4,#fff);border:1px solid #1c5180"></div>
<span class="t" style="left:44.00px;top:484.53px;font-size:10px;line-height:16px;color:#000;letter-spacing:0.542px;">Back to top</span>
<span class="t" style="left:180.00px;top:480.53px;font-size:10px;line-height:16px;color:#000;letter-spacing:0.552px;font-weight:bold;-webkit-text-stroke:0.3px #000;">Vote for Omerta!</span>
<div class="abs" style="left:20px;top:514px;width:736px;height:92px;background:#000"></div>
<div class="abs" style="left:21px;top:515px;width:734px;height:21px;background:#dfbfff;border-top:1px solid #ecd6ff;border-right:1px solid #ecd6ff"></div>
<div class="abs" style="left:21px;top:537px;width:734px;height:42px;background:#f8f8f8;border-top:1px solid #fff;border-right:1px solid #fff"></div>
<div class="abs" style="left:21px;top:580px;width:734px;height:25px;background:#efefef;border-top:1px solid #f8f8f8;border-right:1px solid #f8f8f8"></div>
<span class="t" style="left:24.30px;top:516.69px;font-size:11px;line-height:17px;color:#000;letter-spacing:0.666px;font-weight:bold;-webkit-text-stroke:0.3px #000;">Xtz</span>
<span class="t" style="left:179.50px;top:516.54px;font-size:10px;line-height:16px;color:#000;letter-spacing:0.233px;font-weight:bold;-webkit-text-stroke:0.25px #000;">Posted on:</span>
<span class="t" style="left:237.50px;top:516.54px;font-size:10px;line-height:16px;color:#000;letter-spacing:1.248px;">02:16:42 30-10-2007 OT</span>
<svg style="left:730px;top:520px" width="17" height="12" viewBox="0 0 17 12"><rect x="0.5" y="0.5" width="8" height="10" fill="#fff" stroke="#000" stroke-width="1"/><path d="M6 0.5 L8.5 3" stroke="#000" stroke-width="1" fill="none"/><rect x="2" y="3" width="5" height="1" fill="#77772a"/><rect x="2" y="5" width="5" height="1" fill="#77772a"/><rect x="2" y="7" width="5" height="1" fill="#77772a"/><rect x="8.5" y="4.6" width="3" height="1.9" fill="#d40000"/><path d="M11 1.2 L16 5.6 L11 10 Z" fill="#d40000"/></svg>
<span class="t" style="left:23.40px;top:539.04px;font-size:10px;line-height:16px;color:#0000e0;letter-spacing:0.354px;font-weight:bold;">New User (D)</span>
<span class="t" style="left:23.50px;top:562.54px;font-size:10px;line-height:16px;color:#000;letter-spacing:0.239px;font-weight:bold;-webkit-text-stroke:0.25px #000;">Posts:</span>
<span class="t" style="left:59.40px;top:562.54px;font-size:10px;line-height:16px;color:#000;letter-spacing:1.000px;">1</span>
<span class="t" style="left:180.00px;top:545.84px;font-size:12px;line-height:18px;color:#000;letter-spacing:0.274px;">Fui hackado!</span>
<svg style="left:256px;top:540px" width="19" height="19" viewBox="0 0 19 19"><rect x="0" y="0" width="19" height="19" fill="#000"/><rect x="2" y="2" width="15" height="15" fill="#fff"/><circle cx="9.5" cy="9.5" r="7.2" fill="#000"/><circle cx="9.5" cy="9.5" r="6.4" fill="#e80000"/><path d="M4.5 12.5 A6.4 6.4 0 0 0 14.5 12.5 Q9.5 9.5 4.5 12.5Z" fill="#c40000"/><rect x="7" y="6.2" width="2" height="2" fill="#000"/><rect x="10.2" y="6.2" width="2" height="2" fill="#000"/><path d="M5.2 13.2 L7.8 10.8 Q9.5 10 11.2 10.8 L13.8 13.2" stroke="#000" stroke-width="1" fill="none"/></svg>
<div class="abs" style="left:28px;top:586px;width:13px;height:13px;background:linear-gradient(135deg,#dcdcd4,#fff);border:1px solid #1c5180"></div>
<span class="t" style="left:44.00px;top:588.54px;font-size:10px;line-height:16px;color:#000;letter-spacing:0.542px;">Back to top</span>
</div>
<div class="abs" style="left:979px;top:244px;width:173px;height:568px;background:#3f505e"></div>
<span class="t" style="left:991.00px;top:256.00px;font-size:13px;line-height:19px;color:#fff;letter-spacing:-0.080px;">Últimas notícias:</span>
<div class="abs" style="left:992px;top:281px;width:147px;height:2px;background:#9aa3aa;border-bottom:1px solid #c3c8cc"></div>
<div class="abs" style="left:992px;top:328px;width:147px;height:2px;background:#9aa3aa;border-bottom:1px solid #c3c8cc"></div>
<div class="abs" style="left:992px;top:375px;width:147px;height:2px;background:#9aa3aa;border-bottom:1px solid #c3c8cc"></div>
<div class="abs" style="left:992px;top:423px;width:147px;height:2px;background:#9aa3aa;border-bottom:1px solid #c3c8cc"></div>
<div class="abs" style="left:992px;top:470px;width:147px;height:2px;background:#9aa3aa;border-bottom:1px solid #c3c8cc"></div>
<div class="abs" style="left:992px;top:517px;width:147px;height:2px;background:#9aa3aa;border-bottom:1px solid #c3c8cc"></div>
<span class="t" style="left:991.50px;top:286.50px;font-size:13px;line-height:19px;color:#fff;letter-spacing:-0.050px;">24-10</span>
<span class="t" style="left:992.50px;top:302.50px;font-size:13px;line-height:19px;color:#fff;letter-spacing:-0.015px;">#Preços.pt</span>
<span class="t" style="left:991.50px;top:334.00px;font-size:13px;line-height:19px;color:#fff;letter-spacing:-0.050px;">23-10</span>
<span class="t" style="left:991.50px;top:350.00px;font-size:13px;line-height:19px;color:#fff;letter-spacing:-0.290px;">Novos códigos</span>
<span class="t" style="left:991.50px;top:381.50px;font-size:13px;line-height:19px;color:#fff;letter-spacing:-0.050px;">22-10</span>
<span class="t" style="left:991.50px;top:397.50px;font-size:13px;line-height:19px;color:#fff;letter-spacing:-0.156px;">Congratz Brando!</span>
<span class="t" style="left:991.50px;top:428.50px;font-size:13px;line-height:19px;color:#fff;letter-spacing:-0.050px;">22-10</span>
<span class="t" style="left:991.50px;top:444.50px;font-size:13px;line-height:19px;color:#fff;letter-spacing:-0.068px;">Sudmota sai da Crew</span>
<span class="t" style="left:991.50px;top:476.50px;font-size:13px;line-height:19px;color:#fff;letter-spacing:-0.050px;">20-10</span>
<span class="t" style="left:991.50px;top:492.50px;font-size:13px;line-height:19px;color:#fff;letter-spacing:0.036px;">Forum a 100%</span>
<span class="t" style="left:1096.00px;top:523.50px;font-size:13px;line-height:19px;color:#fff;letter-spacing:-0.040px;">Mais...</span>
<span class="t" style="left:1003.50px;top:556.34px;font-size:12px;line-height:18px;color:#fff;letter-spacing:-0.355px;">GUIA DE SEGURANÇA</span>
<span class="t" style="left:1039.50px;top:718.00px;font-size:13px;line-height:19px;color:#fff;letter-spacing:-0.176px;">Créditos</span>
<span class="t" style="left:1005.50px;top:734.00px;font-size:13px;line-height:19px;color:#fff;letter-spacing:-0.223px;">Log de Modificações</span>
<span class="t" style="left:1013.00px;top:750.00px;font-size:13px;line-height:19px;color:#fff;letter-spacing:-0.013px;">Situations Vacant</span>
<span class="t" style="left:1014.50px;top:766.00px;font-size:13px;line-height:19px;color:#fff;letter-spacing:0.009px;">Votos &amp; Afiliados</span>
<span class="t" style="left:48.48px;top:132.82px;font-family:'Liberation Serif',serif;font-weight:bold;font-size:82px;line-height:92px;color:#fff;transform:scaleX(0.6263);transform-origin:0 0;-webkit-text-stroke:1.2px #fff">m</span>
<span class="t" style="left:95.62px;top:132.82px;font-family:'Liberation Serif',serif;font-weight:bold;font-size:82px;line-height:92px;color:#fff;transform:scaleX(0.7029);transform-origin:0 0;-webkit-text-stroke:1.2px #fff">e</span>
<span class="t" style="left:126.33px;top:132.82px;font-family:'Liberation Serif',serif;font-weight:bold;font-size:82px;line-height:92px;color:#fff;transform:scaleX(0.5517);transform-origin:0 0;-webkit-text-stroke:1.2px #fff">r</span>
<span class="t" style="left:146.81px;top:132.82px;font-family:'Liberation Serif',serif;font-weight:bold;font-size:82px;line-height:92px;color:#fff;transform:scaleX(0.6889);transform-origin:0 0;-webkit-text-stroke:1.2px #fff">t</span>
<span class="t" style="left:169.91px;top:132.82px;font-family:'Liberation Serif',serif;font-weight:bold;font-size:82px;line-height:92px;color:#fff;transform:scaleX(0.6801);transform-origin:0 0;-webkit-text-stroke:1.2px #fff">a</span>
<svg style="left:0px;top:140px" width="60" height="80" viewBox="0 140 60 80"><path fill-rule="evenodd" fill="#fff" d="M29.2 166.5 C38 166.5 44.2 175 44.2 187 C44.2 199.5 38 208 29.2 208 C20.4 208 14.2 199.5 14.2 187 C14.2 175 20.4 166.5 29.2 166.5Z M29.7 171 C27.8 171 27 173 27 177 L27 197 C27 201.5 27.8 204 29.7 204 C31.6 204 32.4 201.5 32.4 197 L32.4 177 C32.4 173 31.6 171 29.7 171Z"/><path d="M16 173.5 Q24 169 33 167.5 L33 172 Q24 173 17 177Z" fill="#e8a58c"/><path d="M12.8 164.2 Q12.5 153 18 151.8 Q24 150.6 31 151.2 Q36.5 151.6 37.6 158 L38 163 Q25 163.5 12.8 166Z" fill="#0a0a0a"/><path d="M5.6 174.8 Q15 169.5 28 166.6 Q38 164.6 47 163 L47.2 164.4 Q40 167 30 169.2 Q17 172 6 175.8Z" fill="#0a0a0a" stroke="#0a0a0a" stroke-width="1.2" stroke-linejoin="round"/></svg>
<span class="t" style="left:611.00px;top:138.00px;font-size:13px;line-height:19px;color:#fff;letter-spacing:0.000px;font-weight:bold;">P</span>
<span class="t" style="left:620.00px;top:138.00px;font-size:13px;line-height:19px;color:#fff;letter-spacing:-0.027px;">osição:</span>
<span class="t" style="left:667.00px;top:138.00px;font-size:13px;line-height:19px;color:#fff;letter-spacing:-0.330px;">#7406</span>
<span class="t" style="left:611.00px;top:158.00px;font-size:13px;line-height:19px;color:#fff;letter-spacing:0.000px;font-weight:bold;">P</span>
<span class="t" style="left:620.00px;top:158.00px;font-size:13px;line-height:19px;color:#fff;letter-spacing:-0.069px;">ontos:</span>
<span class="t" style="left:664.50px;top:158.00px;font-size:13px;line-height:19px;color:#fff;letter-spacing:0.000px;">3</span>
<svg style="left:1052px;top:131px" width="100" height="97" viewBox="1052 131 100 97"><rect x="1099" y="140" width="2" height="9" fill="#fff"/><rect x="1103" y="140" width="2" height="9" fill="#fff"/><rect x="1135" y="179" width="6" height="2" fill="#fff"/><rect x="1063" y="179" width="7" height="2" fill="#fff"/><rect x="1101" y="211" width="2" height="7" fill="#fff"/><line x1="1118.50" y1="150.42" x2="1121.50" y2="145.23" stroke="#c8ccd0" stroke-width="0.9"/><line x1="1130.58" y1="162.50" x2="1135.77" y2="159.50" stroke="#c8ccd0" stroke-width="0.9"/><line x1="1130.58" y1="195.50" x2="1135.77" y2="198.50" stroke="#c8ccd0" stroke-width="0.9"/><line x1="1118.50" y1="207.58" x2="1121.50" y2="212.77" stroke="#c8ccd0" stroke-width="0.9"/><line x1="1085.50" y1="207.58" x2="1082.50" y2="212.77" stroke="#c8ccd0" stroke-width="0.9"/><line x1="1073.42" y1="195.50" x2="1068.23" y2="198.50" stroke="#c8ccd0" stroke-width="0.9"/><line x1="1073.42" y1="162.50" x2="1068.23" y2="159.50" stroke="#c8ccd0" stroke-width="0.9"/><line x1="1085.50" y1="150.42" x2="1082.50" y2="145.23" stroke="#c8ccd0" stroke-width="0.9"/><line x1="1102" y1="179" x2="1121.5" y2="173.7" stroke="#d4d4d4" stroke-width="3" stroke-linecap="round"/><line x1="1102.5" y1="182" x2="1105.3" y2="209.5" stroke="#d4d4d4" stroke-width="2"/><line x1="1103" y1="182" x2="1117" y2="212.7" stroke="#fff" stroke-width="1"/><circle cx="1102" cy="179" r="6.4" fill="#d2d2d2" stroke="#fff" stroke-width="1"/></svg>
<!-- bottom -->
<div class="abs" style="left:0px;top:812px;width:1152px;height:22px;background:linear-gradient(#e4e1d2 0,#efede2 20%,#ece9d8 100%);border-top:1px solid #b4b1a2"></div>
<span class="t" style="left:5.50px;top:814.99px;font-size:11px;line-height:17px;color:#000;letter-spacing:-0.448px;">Concluído</span>
<svg style="left:1135px;top:815px" width="16" height="17" viewBox="0 0 16 17"><rect x="0.5" y="0.5" width="9" height="9" fill="#e9eef7" stroke="#7f93b6"/><path d="M2 3 H8 M2 5 H8 M2 7 H8" stroke="#8aa0c8" stroke-width="1"/><rect x="5.5" y="6.5" width="10" height="10" fill="#5b8fd8" stroke="#2d5ca8"/><rect x="7.5" y="7" width="6" height="3.5" fill="#eef3fb"/><rect x="8" y="12.5" width="5" height="4" fill="#9ed06a"/></svg>
<div class="abs" style="left:934px;top:783px;width:201px;height:52px;background:linear-gradient(#f2f8fa 0,#ddeaf0 38%,#fbfdfe 44%,#ffffff 100%);border:1px solid #6f9bd0;border-bottom:none"></div>
<div class="abs" style="left:936px;top:805px;width:197px;height:1px;background:#bcd3e2"></div>
<svg style="left:938.5px;top:786px" width="19" height="17" viewBox="0 0 20 18"><path d="M2 3 Q6 0.5 9.5 2.5 L8 8.5 Q4.5 6.8 0.8 9Z" fill="#f0562a"/><path d="M10.8 3 Q14.5 5.2 19 2.8 L17.3 9 Q13.5 11.2 9.3 9Z" fill="#7cc142"/><path d="M0.5 10.2 Q4.2 8 7.7 9.8 L6.2 15.8 Q2.7 14 -1 16.3Z" fill="#3a8ee8"/><path d="M9 10.3 Q13 12.6 17 10.3 L15.4 16.4 Q11.5 18.6 7.5 16.4Z" fill="#fbc42d"/></svg>
<span class="t" style="left:961.00px;top:786.84px;font-size:12px;line-height:18px;color:#1e2a34;letter-spacing:-0.806px;">Windows Live Messenger</span>
<svg style="left:1118px;top:791px" width="9" height="9"><path d="M1 1 L8 8 M8 1 L1 8" stroke="#a3abb0" stroke-width="1.8"/></svg>
<div class="abs" style="left:940px;top:812px;width:54px;height:24px;background:#fff;border:1px solid #cfd8df;border-bottom:none"></div>
<svg style="left:943px;top:815px" width="48" height="20" viewBox="0 0 48 20"><rect width="48" height="20" fill="#6b4a34"/><rect x="0" y="0" width="12" height="20" fill="#8c8a86"/><rect x="36" y="0" width="12" height="20" fill="#9b9894"/><ellipse cx="27" cy="9" rx="9" ry="8" fill="#15110f"/><ellipse cx="27" cy="15" rx="5" ry="4" fill="#6a4536"/><path d="M12 20 Q24 14 40 20Z" fill="#e9e4de"/></svg>
<span class="t" style="left:1000.50px;top:824.84px;font-size:12px;line-height:18px;color:#222;letter-spacing:0.000px;">*</span>
<span class="t" style="left:1009.50px;top:824.69px;font-size:11px;line-height:17px;color:#e01010;letter-spacing:-0.668px;">Slice</span>
<span class="t" style="left:1033.00px;top:824.69px;font-size:11px;line-height:17px;color:#222;letter-spacing:0.028px;">( `_´)</span>
<div class="abs" style="left:1073px;top:829px;width:1px;height:6px;background:#222"></div>
<div class="abs" style="left:0px;top:834px;width:1152px;height:30px;background:linear-gradient(#2f62d8 0,#3f87f2 6%,#2a6ce6 14%,#245fdc 30%,#2259d6 70%,#2056d0 88%,#1a44ad 100%)"></div>
<div class="abs" style="left:0px;top:834px;width:110px;height:30px;background:linear-gradient(#3c8a3c 0,#5fb35c 8%,#43a043 22%,#3a963a 60%,#368c36 85%,#2a6e2c 100%);border-radius:0 14px 14px 0 / 0 16px 16px 0;box-shadow:1px 0 2px #1b3f8a,inset -3px 0 5px -2px #245a26"></div>
<svg style="left:9.5px;top:839px" width="20" height="18" viewBox="0 0 20 18"><path d="M2 3 Q6 0.5 9.5 2.5 L8 8.5 Q4.5 6.8 0.8 9Z" fill="#f0562a"/><path d="M10.8 3 Q14.5 5.2 19 2.8 L17.3 9 Q13.5 11.2 9.3 9Z" fill="#7cc142"/><path d="M0.5 10.2 Q4.2 8 7.7 9.8 L6.2 15.8 Q2.7 14 -1 16.3Z" fill="#3a8ee8"/><path d="M9 10.3 Q13 12.6 17 10.3 L15.4 16.4 Q11.5 18.6 7.5 16.4Z" fill="#fbc42d"/></svg>
<span class="t" style="left:34.70px;top:838.03px;font-size:16.5px;line-height:22px;color:#fff;letter-spacing:0.414px;font-weight:bold;font-style:italic;text-shadow:1px 1px 1px #1f4a20;">Iniciar</span>
<svg style="left:122px;top:841px" width="16" height="16" viewBox="0 0 16 16"><rect x="1.5" y="2" width="12" height="12.5" rx="2" fill="#e6effb" stroke="#2f74d8" stroke-width="1.8" transform="rotate(-6 8 8)"/><path d="M4.5 6 H9 M4.5 8.5 H10 M4.5 11 H8" stroke="#2f74d8" stroke-width="1.2"/><path d="M8.5 9.5 L13.5 3 L15 4.2 L10 10.6Z" fill="#f0a030" stroke="#a05a10" stroke-width=".5"/></svg>
<svg style="left:145px;top:841px" width="16" height="16" viewBox="0 0 16 16"><circle cx="8" cy="8" r="7.5" fill="#e6e9ee"/><circle cx="8" cy="8" r="6.2" fill="none" stroke="#e08a1e" stroke-width="1.6" stroke-dasharray="9.7 9.7"/><circle cx="8" cy="8" r="6.2" fill="none" stroke="#4aa83c" stroke-width="1.6" stroke-dasharray="9.7 29" stroke-dashoffset="-9.7"/><circle cx="8" cy="8" r="4.8" fill="#2d6fd8"/><path d="M6.4 5.2 L11 8 L6.4 10.8Z" fill="#fff"/></svg>
<svg style="left:168px;top:841px" width="16.5" height="15.5" viewBox="0 0 16.5 15.5"><defs><linearGradient id="fg2" x1="0" y1="0" x2="0.6" y2="1"><stop offset="0" stop-color="#f9b22a"/><stop offset=".55" stop-color="#ee7d1c"/><stop offset="1" stop-color="#d9541a"/></linearGradient></defs><circle cx="8.8" cy="7.4" r="6.3" fill="#1c56b8"/><circle cx="9.6" cy="6" r="3.8" fill="#4d9ee8"/><path d="M9 3.2 Q11 4 10.5 6.5 Q9 6 8.2 4.5Z" fill="#9fd0f8"/><path d="M0.7 6.8 C0.4 3.4 1.8 1.3 2.9 0.9 C2.8 2.2 3.4 3.2 4.4 3.7 C5.9 2.6 7.9 3.1 8.5 4.6 C7 4.6 6 5.6 6.5 7.1 C7.6 7.5 8.6 8.1 8.1 9.6 C9.6 10.6 12.6 10.1 13.5 7.1 C14 4.6 13.1 3.1 12.6 2.6 C15.1 4.1 16.2 7.1 15.5 10.1 C14.5 13.6 11 15.4 7.5 15 C3.5 14.5 1 11.2 0.7 6.8Z" fill="url(#fg2)"/></svg>
<div class="abs" style="left:204.5px;top:838px;width:77px;height:23px;background:linear-gradient(#5a96f8 0,#3c81f3 12%,#3577ee 50%,#2f6de4 100%);border:1px solid #2a5bc8;border-radius:3px;box-shadow:inset 1px 1px 0 rgba(255,255,255,.25)"></div>
<svg style="left:214px;top:842.5px" width="16" height="14" viewBox="0 0 16 14"><path d="M0.5 2 Q0.5 0.8 1.8 0.8 H5.5 L7 2.5 H14 Q15.5 2.5 15.5 4 V12 Q15.5 13.2 14 13.2 H2 Q0.5 13.2 0.5 12Z" fill="#f3d36b" stroke="#b08a22" stroke-width=".9"/><path d="M1.2 5 H14.8 V12 Q14.8 12.6 14 12.6 H2 Q1.2 12.6 1.2 12Z" fill="#fbe89a"/></svg>
<span class="t" style="left:233.50px;top:840.69px;font-size:11px;line-height:17px;color:#fff;letter-spacing:-0.354px;">inclu…</span>
<div class="abs" style="left:283.95px;top:838px;width:77px;height:23px;background:linear-gradient(#5a96f8 0,#3c81f3 12%,#3577ee 50%,#2f6de4 100%);border:1px solid #2a5bc8;border-radius:3px;box-shadow:inset 1px 1px 0 rgba(255,255,255,.25)"></div>
<svg style="left:293.45px;top:841.5px" width="16" height="16" viewBox="0 0 16 16"><circle cx="8" cy="8" r="7.5" fill="#5c9a24"/><circle cx="8" cy="8" r="6.3" fill="#8cc63f"/><path d="M11.5 3.5 C8 4 5.5 6.5 5 10 C4.8 12 6.5 12.6 7.8 11.5" stroke="#fff" stroke-width="1.5" fill="none"/><path d="M4.5 8.2 H9" stroke="#fff" stroke-width="1.2"/></svg>
<span class="t" style="left:312.95px;top:840.69px;font-size:11px;line-height:17px;color:#fff;letter-spacing:-1.089px;">Macr…</span>
<div class="abs" style="left:363.4px;top:838px;width:77px;height:23px;background:linear-gradient(#1a46b0 0,#1e4fc0 20%,#2258cc 100%);border:1px solid #163a96;border-radius:3px;box-shadow:inset 1px 1px 0 rgba(255,255,255,.25)"></div>
<svg style="left:372.9px;top:841.5px" width="16.5" height="15.5" viewBox="0 0 16.5 15.5"><defs><linearGradient id="fg3" x1="0" y1="0" x2="0.6" y2="1"><stop offset="0" stop-color="#f9b22a"/><stop offset=".55" stop-color="#ee7d1c"/><stop offset="1" stop-color="#d9541a"/></linearGradient></defs><circle cx="8.8" cy="7.4" r="6.3" fill="#1c56b8"/><circle cx="9.6" cy="6" r="3.8" fill="#4d9ee8"/><path d="M9 3.2 Q11 4 10.5 6.5 Q9 6 8.2 4.5Z" fill="#9fd0f8"/><path d="M0.7 6.8 C0.4 3.4 1.8 1.3 2.9 0.9 C2.8 2.2 3.4 3.2 4.4 3.7 C5.9 2.6 7.9 3.1 8.5 4.6 C7 4.6 6 5.6 6.5 7.1 C7.6 7.5 8.6 8.1 8.1 9.6 C9.6 10.6 12.6 10.1 13.5 7.1 C14 4.6 13.1 3.1 12.6 2.6 C15.1 4.1 16.2 7.1 15.5 10.1 C14.5 13.6 11 15.4 7.5 15 C3.5 14.5 1 11.2 0.7 6.8Z" fill="url(#fg3)"/></svg>
<span class="t" style="left:392.40px;top:840.69px;font-size:11px;line-height:17px;color:#fff;letter-spacing:-1.709px;">Ome…</span>
<div class="abs" style="left:442.85px;top:838px;width:77px;height:23px;background:linear-gradient(#5a96f8 0,#3c81f3 12%,#3577ee 50%,#2f6de4 100%);border:1px solid #2a5bc8;border-radius:3px;box-shadow:inset 1px 1px 0 rgba(255,255,255,.25)"></div>
<svg style="left:452.35px;top:841.5px" width="17" height="16" viewBox="0 0 17 16"><circle cx="11" cy="4.5" r="3" fill="#58b848"/><path d="M5.5 15 Q5.5 8 11 8 Q16.5 8 16.5 15Z" fill="#58b848"/><circle cx="5" cy="5.5" r="2.6" fill="#d9ecf8"/><path d="M0.5 15 Q0.5 9 5 9 Q9.5 9 9.5 15Z" fill="#d9ecf8"/></svg>
<span class="t" style="left:471.85px;top:840.69px;font-size:11px;line-height:17px;color:#fff;letter-spacing:-0.736px;">Win…</span>
<div class="abs" style="left:522.3px;top:838px;width:77px;height:23px;background:linear-gradient(#5a96f8 0,#3c81f3 12%,#3577ee 50%,#2f6de4 100%);border:1px solid #2a5bc8;border-radius:3px;box-shadow:inset 1px 1px 0 rgba(255,255,255,.25)"></div>
<svg style="left:531.8px;top:841.5px" width="17" height="16" viewBox="0 0 17 16"><circle cx="11" cy="4.5" r="3" fill="#7cc86a"/><path d="M5.5 15 Q5.5 8 11 8 Q16.5 8 16.5 15Z" fill="#7cc86a"/><circle cx="5" cy="5.5" r="2.6" fill="#d9ecf8"/><path d="M0.5 15 Q0.5 9 5 9 Q9.5 9 9.5 15Z" fill="#d9ecf8"/></svg>
<span class="t" style="left:551.30px;top:840.69px;font-size:11px;line-height:17px;color:#fff;letter-spacing:-2.057px;">@Hu…</span>
<div class="abs" style="left:601.75px;top:838px;width:77px;height:23px;background:linear-gradient(#f0a040 0,#e8801a 20%,#e27510 100%);border:1px solid #b45a0c;border-radius:3px;box-shadow:inset 1px 1px 0 rgba(255,255,255,.25)"></div>
<svg style="left:611.25px;top:841.5px" width="16" height="16" viewBox="0 0 16 16"><rect x="1" y="1" width="14" height="14" fill="#c8161e"/><rect x="3" y="3" width="3" height="9" fill="#1b2fa8"/><rect x="8" y="3" width="3" height="9" fill="#1b2fa8"/><circle cx="11.5" cy="11.5" r="3.2" fill="#f7d42a"/></svg>
<span class="t" style="left:630.75px;top:840.69px;font-size:11px;line-height:17px;color:#fff;letter-spacing:-0.916px;">mIR…</span>
<div class="abs" style="left:681.2px;top:838px;width:77px;height:23px;background:linear-gradient(#5a96f8 0,#3c81f3 12%,#3577ee 50%,#2f6de4 100%);border:1px solid #2a5bc8;border-radius:3px;box-shadow:inset 1px 1px 0 rgba(255,255,255,.25)"></div>
<svg style="left:690.7px;top:842.5px" width="16" height="14" viewBox="0 0 16 14"><path d="M0.5 2 Q0.5 0.8 1.8 0.8 H5.5 L7 2.5 H14 Q15.5 2.5 15.5 4 V12 Q15.5 13.2 14 13.2 H2 Q0.5 13.2 0.5 12Z" fill="#f3d36b" stroke="#b08a22" stroke-width=".9"/><path d="M1.2 5 H14.8 V12 Q14.8 12.6 14 12.6 H2 Q1.2 12.6 1.2 12Z" fill="#fbe89a"/></svg>
<span class="t" style="left:710.20px;top:840.69px;font-size:11px;line-height:17px;color:#fff;letter-spacing:0.253px;">watch</span>
<div class="abs" style="left:760.65px;top:838px;width:77px;height:23px;background:linear-gradient(#5a96f8 0,#3c81f3 12%,#3577ee 50%,#2f6de4 100%);border:1px solid #2a5bc8;border-radius:3px;box-shadow:inset 1px 1px 0 rgba(255,255,255,.25)"></div>
<svg style="left:770.15px;top:841.5px" width="17" height="16" viewBox="0 0 17 16"><circle cx="7" cy="7" r="6.3" fill="#3b8fd9"/><path d="M3 4 Q6 2 8 4 Q9 6.5 6 8 Q3.5 8 3 4Z M8 9 Q11 8 12 10 Q10.5 12.5 8.5 12Z" fill="#6cc04a"/><rect x="9" y="9.5" width="7" height="5" fill="#dfe6ee" stroke="#55657a" stroke-width=".8"/></svg>
<span class="t" style="left:789.65px;top:840.69px;font-size:11px;line-height:17px;color:#fff;letter-spacing:-0.382px;">Ligaç…</span>
<div class="abs" style="left:840.1px;top:838px;width:77px;height:23px;background:linear-gradient(#5a96f8 0,#3c81f3 12%,#3577ee 50%,#2f6de4 100%);border:1px solid #2a5bc8;border-radius:3px;box-shadow:inset 1px 1px 0 rgba(255,255,255,.25)"></div>
<svg style="left:849.6px;top:841.5px" width="16" height="16" viewBox="0 0 16 16"><circle cx="8" cy="8" r="7.3" fill="#1a49d8"/><path d="M9.8 2.5 L6 9 H8.2 L6.4 13.5 L10.6 6.8 H8.3Z" fill="#dfe9ff"/></svg>
<span class="t" style="left:869.10px;top:840.69px;font-size:11px;line-height:17px;color:#fff;letter-spacing:-0.368px;">Core…</span>
<div class="abs" style="left:934px;top:834px;width:218px;height:30px;background:linear-gradient(#1a78d8 0,#38a6f4 6%,#1f96ee 14%,#1590ea 30%,#118ae6 70%,#0f82dc 88%,#0b5fb0 100%);border-left:1px solid #0c3f9c;box-shadow:inset 1px 0 0 #4db4f8"></div>
<svg style="left:944px;top:841px" width="16" height="16" viewBox="0 0 16 16"><circle cx="8" cy="8" r="7.5" fill="#e4e4e4" stroke="#9a9a9a"/><path d="M4.5 7 A3.6 3.6 0 0 1 11 5.5 M11.5 9 A3.6 3.6 0 0 1 5 10.5" stroke="#9a9a9a" stroke-width="1.6" fill="none"/><path d="M11.8 3.5 V6.3 H9Z M4.2 12.5 V9.7 H7Z" fill="#9a9a9a"/></svg>
<svg style="left:962px;top:841px" width="16" height="16" viewBox="0 0 16 16"><circle cx="8" cy="8" r="7.5" fill="#9a9c9e"/><path d="M1.5 6 Q4 1 9 1.5 Q14 2.5 14.5 7 Q11 10 8 7.5 Q4.5 5 1.5 6Z" fill="#e8eaec"/></svg>
<svg style="left:980px;top:840px" width="17" height="17" viewBox="0 0 17 17"><rect x="5" y="1" width="8" height="7" fill="#3a50b4" stroke="#c8d0e8" stroke-width=".8"/><rect x="1" y="5" width="8" height="7" fill="#4a62c8" stroke="#c8d0e8" stroke-width=".8"/><rect x="2" y="12.5" width="6" height="2" fill="#c8ccd8"/><path d="M8 9 L15 16 M15 9 L8 16" stroke="#e0201c" stroke-width="2.2"/></svg>
<svg style="left:996px;top:840px" width="18" height="18" viewBox="0 0 18 18"><ellipse cx="7.5" cy="7.5" rx="6" ry="6.8" fill="#6a6e72" stroke="#c6cacc" stroke-width="1"/><ellipse cx="6.5" cy="6.5" rx="3" ry="3.6" fill="#2c2f33"/><path d="M9 15.5 Q13 15 16 11" stroke="#8aa0e0" stroke-width="1.4" fill="none"/></svg>
<svg style="left:1015px;top:840px" width="18" height="18" viewBox="0 0 18 18"><circle cx="7.5" cy="8.5" r="6.8" fill="#9a9c9e"/><path d="M2 6 Q5 2 10 3 L11 10 Q7 13 2 10Z" fill="#c6c8ca"/><rect x="10.5" y="2" width="2.2" height="15" fill="#7a9a6a"/><path d="M11 2 L16 4 L12 5.5Z" fill="#c8c07a"/></svg>
<svg style="left:1034px;top:840px" width="15" height="18" viewBox="0 0 15 18"><circle cx="7.5" cy="5" r="4" fill="#6cc24a"/><path d="M0.5 17 Q0.5 9.5 7.5 9.5 Q14.5 9.5 14.5 17Z" fill="#58b03a"/><circle cx="6.3" cy="4" r="1.6" fill="#a4e088"/></svg>
<svg style="left:1053px;top:839px" width="13" height="20" viewBox="0 0 13 20"><ellipse cx="6.5" cy="10" rx="6.2" ry="9.6" fill="#0a28d8"/><path d="M3 6.5 L10 13 L6.5 16.5 V3.5 L10 7 L3 13.5" stroke="#fff" stroke-width="1.5" fill="none"/></svg>
<svg style="left:1070px;top:841px" width="16" height="16" viewBox="0 0 16 16"><rect x="0.5" y="0.5" width="15" height="15" rx="2" fill="#0b5a1a" stroke="#f2f2f2" stroke-width="1.3"/><path d="M3.5 8 L6.8 11.5 L12.5 4.5" stroke="#fff" stroke-width="2.2" fill="none"/></svg>
<svg style="left:1087px;top:842px" width="17" height="13" viewBox="0 0 17 13"><path d="M0.5 11 Q0.5 1 8.5 1 Q16.5 1 16.5 11Z" fill="#fff"/><rect x="0.5" y="10.5" width="16" height="2" fill="#111"/><path d="M8.5 10 L12.5 4.5" stroke="#111" stroke-width="1.2"/><path d="M3 9 L4 8 M5 5 L6 6 M8.5 3 V4.5" stroke="#111" stroke-width=".9"/></svg>
<span class="t" style="left:1113.50px;top:840.69px;font-size:11px;line-height:17px;color:#fff;letter-spacing:0.148px;">2:29</span>
</body></html>
